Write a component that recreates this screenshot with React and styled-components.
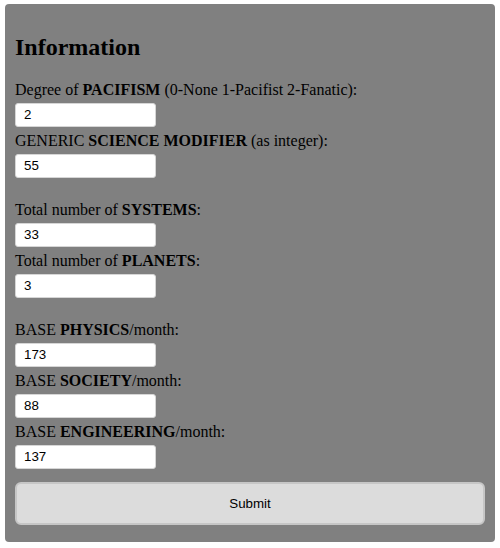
import React from 'react';
import styled, { createGlobalStyle } from 'styled-components';

const GlobalStyle = createGlobalStyle`
  body {
    margin: 0;
    background: #fff;
    font-family: 'Liberation Serif', 'Times New Roman', serif;
  }
`;

const Panel = styled.form`
  margin: 4px 5px;
  width: 490px;
  box-sizing: border-box;
  padding: 9px 10px 17px;
  background: #808080;
  border-radius: 4px;
`;

const Title = styled.h2`
  margin: 21px 0 18px;
  font-size: 24px;
  font-weight: bold;
  line-height: 26.6px;
  color: #000;
`;

const Group = styled.div`
  display: flex;
  flex-direction: column;
  margin-bottom: ${props => props.spaced ? '18px' : '0'};
`;

const Field = styled.div`
  display: flex;
  flex-direction: column;
  align-items: flex-start;
`;

const Label = styled.label`
  font-size: 16px;
  line-height: 18px;
  padding-top: 2px;
  margin-bottom: 4px;
  color: #000;
  b { font-weight: bold; }
`;

const Input = styled.input`
  width: 141px;
  height: 24px;
  box-sizing: border-box;
  margin: 0 0 3px;
  padding: 0 8px;
  border: 1px solid #d6d6d6;
  border-radius: 3px;
  background: #fff;
  font-family: 'Liberation Sans', Arial, sans-serif;
  font-size: 13.33px;
  color: #000;
  outline: none;
`;

const SubmitButton = styled.button`
  display: block;
  width: 100%;
  height: 43px;
  margin-top: 10px;
  box-sizing: border-box;
  border: 2px solid #c6c6c6;
  border-radius: 6px;
  background: #dcdcdc;
  font-family: 'Liberation Sans', Arial, sans-serif;
  font-size: 13.33px;
  color: #000;
`;

const groups = [
  [
    { pre: 'Degree of ', bold: 'PACIFISM', post: ' (0-None 1-Pacifist 2-Fanatic):', value: '2' },
    { pre: 'GENERIC ', bold: 'SCIENCE MODIFIER', post: ' (as integer):', value: '55' },
  ],
  [
    { pre: 'Total number of ', bold: 'SYSTEMS', post: ':', value: '33' },
    { pre: 'Total number of ', bold: 'PLANETS', post: ':', value: '3' },
  ],
  [
    { pre: 'BASE ', bold: 'PHYSICS', post: '/month:', value: '173' },
    { pre: 'BASE ', bold: 'SOCIETY', post: '/month:', value: '88' },
    { pre: 'BASE ', bold: 'ENGINEERING', post: '/month:', value: '137' },
  ],
];

export default function App() {
  return (
    <>
      <GlobalStyle />
      <Panel onSubmit={e => e.preventDefault()}>
        <Title>Information</Title>
        {groups.map((fields, gi) => (
          <Group key={gi} spaced={gi < groups.length - 1}>
            {fields.map(f => (
              <Field key={f.bold}>
                <Label>{f.pre}<b>{f.bold}</b>{f.post}</Label>
                <Input type="text" defaultValue={f.value} />
              </Field>
            ))}
          </Group>
        ))}
        <SubmitButton type="submit">Submit</SubmitButton>
      </Panel>
    </>
  );
}
